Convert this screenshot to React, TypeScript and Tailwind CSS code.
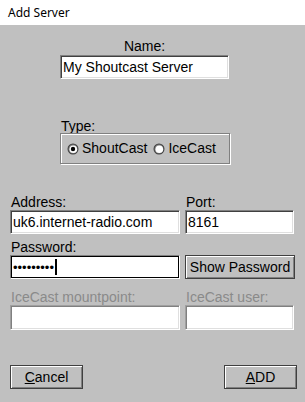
import React from "react";

const sunken =
  "border border-t-[#808080] border-l-[#808080] border-b-white border-r-white shadow-[inset_1px_1px_0_#404040,inset_-1px_-1px_0_#dfdfdf] bg-white";
const raised =
  "border border-[#404040] shadow-[inset_1px_1px_0_#ffffff,inset_-1px_-1px_0_#808080] bg-[#c0c0c0]";

function Radio({ checked }: { checked: boolean }) {
  return (
    <svg width="12" height="12" viewBox="0 0 12 12" className="shrink-0">
      <circle cx="6" cy="6" r="5.5" fill="#404040" />
      <circle cx="6" cy="6" r="4.5" fill="#808080" />
      <circle cx="6.3" cy="6.3" r="3.8" fill="#ffffff" />
      {checked && <circle cx="6" cy="6" r="2.2" fill="#000" />}
    </svg>
  );
}

export default function App() {
  return (
    <div
      className="w-[305px] h-[402px] flex flex-col bg-[#c0c0c0] text-[14px] text-black"
      style={{ fontFamily: '"Liberation Sans", Arial, sans-serif' }}
    >
      <div
        className="h-[25px] bg-white flex items-center pl-[8px] text-[12px] text-black"
        style={{ fontFamily: '"Noto Sans", "Open Sans", sans-serif' }}
      >
        Add Server
      </div>

      {/* Name */}
      <div className="flex flex-col ml-[60px] pt-[13px]">
        <div className="w-[169px] text-center leading-[16px] h-[16px]">Name:</div>
        <div className={`${sunken} w-[169px] h-[24px] mt-[1px] flex items-center pl-[2px] leading-none`}>
          My Shoutcast Server
        </div>
      </div>

      {/* Type */}
      <div className="ml-[60px] mt-[39px] flex flex-col">
        <div className="leading-[16px] h-[15px] pl-[1px]">Type:</div>
        <div className="w-[170px] h-[31px] border border-[#808080] shadow-[inset_1px_1px_0_#ffffff,1px_1px_0_#ffffff] flex items-center pl-[6px] gap-[3px]">
          <Radio checked />
          <span className="mr-[3px]">ShoutCast</span>
          <Radio checked={false} />
          <span>IceCast</span>
        </div>
      </div>

      {/* Address / Port */}
      <div className="mx-[10px] mt-[30px] grid grid-cols-[170px_110px] gap-x-[5px]">
        <div className="leading-[16px] h-[16px] pl-[1px]">Address:</div>
        <div className="leading-[16px] h-[16px] pl-[1px]">Port:</div>
        <div className={`${sunken} h-[24px] flex items-center pl-[2px]`}>uk6.internet-radio.com</div>
        <div className={`${sunken} h-[24px] w-[109px] flex items-center pl-[2px]`}>8161</div>

        <div className="leading-[16px] h-[16px] mt-[5px] pl-[1px] col-span-2">Password:</div>
        <div className="h-[24px] border border-t-[#808080] border-l-[#808080] border-b-white border-r-white shadow-[inset_1px_1px_0_#000,inset_-1px_-1px_0_#000] bg-white flex items-center pl-[2px]">
          <span className="text-[13px] leading-none">•••••••••</span>
          <span className="inline-block w-[2px] h-[16px] bg-black ml-[1px]" />
        </div>
        <div className={`${raised} h-[24px] flex items-center justify-center`}>Show Password</div>

        <div className="leading-[16px] h-[16px] mt-[10px] pl-[1px] text-[#8a8a8a]">IceCast mountpoint:</div>
        <div className="leading-[16px] h-[16px] mt-[10px] pl-[1px] text-[#8a8a8a]">IceCast user:</div>
        <div className="h-[25px] border border-t-[#a0a0a0] border-l-[#a0a0a0] border-b-white border-r-white shadow-[inset_1px_1px_0_#808080,inset_-1px_-1px_0_#dfdfdf] bg-white" />
        <div className="h-[25px] w-[109px] border border-t-[#a0a0a0] border-l-[#a0a0a0] border-b-white border-r-white shadow-[inset_1px_1px_0_#808080,inset_-1px_-1px_0_#dfdfdf] bg-white" />
      </div>

      {/* Buttons */}
      <div className="ml-[10px] mr-[8px] mt-[35px] flex justify-between">
        <div className={`${raised} w-[73px] h-[24px] flex items-center justify-center`}>
          <span>
            <span className="underline">C</span>ancel
          </span>
        </div>
        <div className={`${raised} w-[73px] h-[24px] flex items-center justify-center`}>
          <span>
            <span className="underline">A</span>DD
          </span>
        </div>
      </div>
    </div>
  );
}
